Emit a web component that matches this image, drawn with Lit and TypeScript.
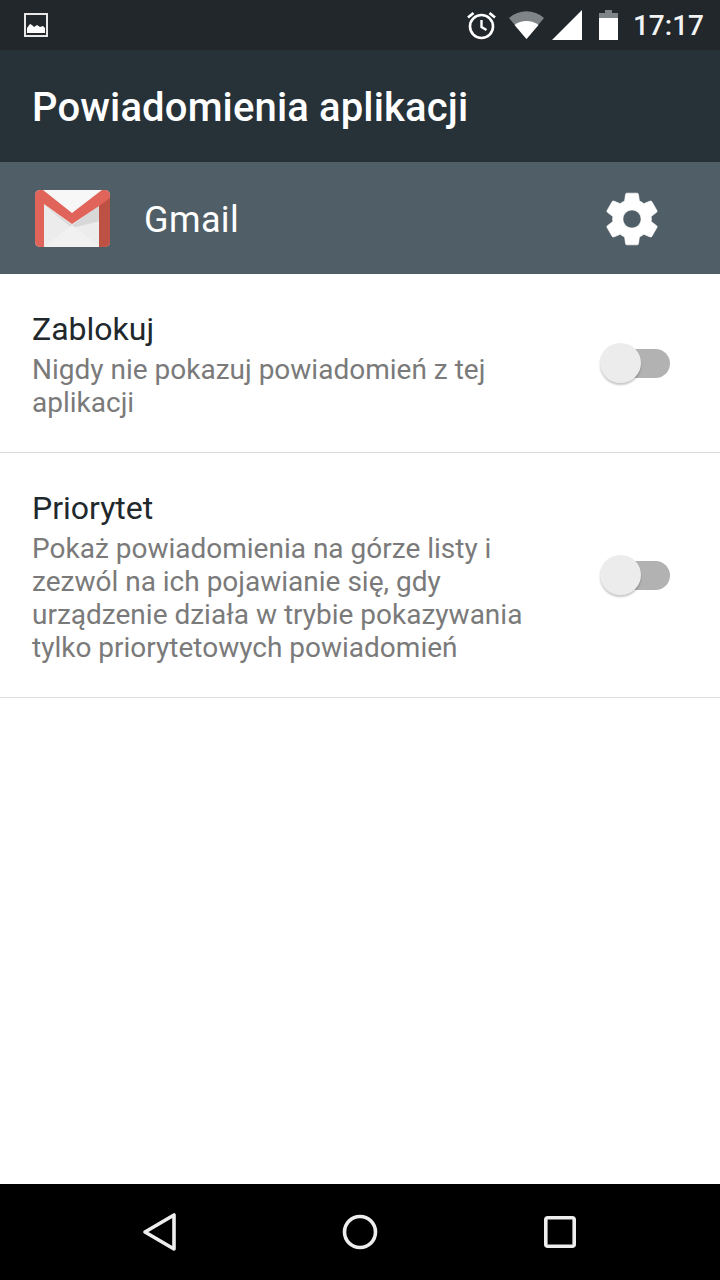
import { LitElement, html, css } from 'lit';
import { customElement } from 'lit/decorators.js';

interface NotificationRow {
  title: string;
  lines: string[];
}

const ROWS: NotificationRow[] = [
  { title: 'Zablokuj', lines: ['Nigdy nie pokazuj powiadomień z tej', 'aplikacji'] },
  {
    title: 'Priorytet',
    lines: [
      'Pokaż powiadomienia na górze listy i',
      'zezwól na ich pojawianie się, gdy',
      'urządzenie działa w trybie pokazywania',
      'tylko priorytetowych powiadomień',
    ],
  },
];

@customElement('app-root')
export class AppRoot extends LitElement {
  static styles = css`
    :host {
      display: flex;
      flex-direction: column;
      width: 720px;
      height: 1280px;
      background: #fff;
      font-family: Roboto, sans-serif;
      overflow: hidden;
    }

    .status {
      height: 50px;
      flex: none;
      background: #21272b;
      display: flex;
      align-items: center;
      padding: 0 16px 0 24px;
      color: #fff;
    }
    .status svg {
      display: block;
    }
    .status .spacer {
      flex: 1;
    }
    .alarm {
      margin-right: 13px;
    }
    .wifi {
      margin-right: 8px;
    }
    .signal {
      margin-right: 17px;
    }
    .clock {
      font-size: 28px;
      font-weight: 500;
      margin-left: 15px;
      color: #f2f3f3;
    }

    .toolbar {
      height: 112px;
      flex: none;
      box-sizing: border-box;
      background: #263238;
      display: flex;
      align-items: center;
      padding: 3px 32px 0;
      color: #fff;
      font-size: 40px;
      font-weight: 500;
      letter-spacing: 0.14px;
    }

    .app-row {
      height: 112px;
      flex: none;
      background: #505f67;
      display: flex;
      align-items: center;
      padding: 0 56px 0 35px;
      color: #fff;
      font-size: 36px;
      letter-spacing: 0.4px;
    }
    .app-name {
      flex: 1;
      margin-left: 34px;
      padding-top: 4px;
    }
    .gmail {
      display: block;
      margin-top: 1px;
    }
    .gear {
      display: block;
      margin: 2px 1px 0 0;
    }

    .row {
      display: flex;
      align-items: center;
      padding: 36px 50px 33px 32px;
      border-bottom: 1px solid #dcdcdc;
    }
    .row-text {
      flex: 1;
    }
    .row-title {
      font-size: 32px;
      line-height: 38px;
      color: #21282c;
    }
    .row-sub {
      font-size: 28px;
      line-height: 33px;
      color: #7a7a7a;
      margin-top: 5px;
    }

    .switch {
      position: relative;
      width: 70px;
      height: 40px;
      flex: none;
      margin-bottom: 4px;
    }
    .track {
      position: absolute;
      left: 2px;
      right: 0;
      top: 6px;
      height: 29px;
      border-radius: 15px;
      background: #b2b2b2;
    }
    .thumb {
      position: absolute;
      left: 0;
      top: 0;
      width: 41px;
      height: 40px;
      border-radius: 50%;
      background: #ececec;
      box-shadow: 0 2px 2px rgba(0, 0, 0, 0.22);
    }

    .fill {
      flex: 1;
    }

    .nav {
      height: 96px;
      flex: none;
      background: #000;
      display: flex;
      align-items: center;
      justify-content: center;
      gap: 152px;
    }
    .nav svg {
      display: block;
    }
  `;

  private _statusIcons() {
    return html`
      <svg width="24" height="24" viewBox="0 0 24 24">
        <rect x="1" y="1" width="22" height="22" fill="none" stroke="#e8e8e8" stroke-width="2" />
        <path d="M3 20v-5l3-4 2 1 2 2 3-2 3 2 3-1 2 2v5z" fill="#fff" />
      </svg>
      <span class="spacer"></span>
      <svg class="alarm" width="29" height="30" viewBox="0 0 29 30">
        <circle cx="14.5" cy="16.5" r="11.5" fill="none" stroke="#fff" stroke-width="2.6" />
        <path d="M14.5 10v7l5 3" fill="none" stroke="#fff" stroke-width="2.4" />
        <path d="M1 7.5L6.5 3M28 7.5L22.5 3" fill="none" stroke="#fff" stroke-width="2.8" />
      </svg>
      <svg class="wifi" width="35" height="30" viewBox="0 0 35 30">
        <path d="M0 8C10-1 25-1 35 8L17.5 29z" fill="#7f8486" />
        <path d="M5.5 15C12 9.5 23 9.5 29.5 15L17.5 29z" fill="#fff" />
      </svg>
      <svg class="signal" width="30" height="30" viewBox="0 0 30 30">
        <path d="M30 0v30H0z" fill="#fff" />
      </svg>
      <svg width="19" height="30" viewBox="0 0 19 30">
        <path d="M6 0h7v3H6zM0 3h19v5H0z" fill="#7f8486" />
        <path d="M0 8h19v22H0z" fill="#fff" />
      </svg>
    `;
  }

  private _gmailIcon() {
    return html`
      <svg class="gmail" width="75" height="58" viewBox="0 0 75 58">
        <rect x="0" y="0" width="75" height="57" rx="5" fill="#ececec" />
        <path d="M8 0h58L37 24z" fill="#f7f7f7" />
        <path d="M9 15l28 20 28-20v16L37 38z" fill="#c4c4c4" opacity="0.5" />
        <path d="M37 35l28 22H9z" fill="#f1f1f1" />
        <path d="M5 0h3l29 23L67 0h3a5 5 0 0 1 5 5v47a5 5 0 0 1-5 5h-6V16L37 34 9 14v43H5a5 5 0 0 1-5-5V5a5 5 0 0 1 5-5z" fill="#e0645a" />
        <path d="M64 16l11-8v44a5 5 0 0 1-5 5h-6z" fill="#bd5244" />
      </svg>
    `;
  }

  private _gearIcon() {
    return html`
      <svg class="gear" width="62" height="62" viewBox="0 0 24 24">
        <path
          fill="#fff"
          stroke="#fff"
          stroke-width="0.25"
          d="M19.43 12.98c.04-.32.07-.64.07-.98s-.03-.66-.07-.98l2.11-1.65c.19-.15.24-.42.12-.64l-2-3.46c-.12-.22-.39-.3-.61-.22l-2.49 1c-.52-.4-1.08-.73-1.69-.98l-.38-2.65C14.46 2.18 14.25 2 14 2h-4c-.25 0-.46.18-.49.42l-.38 2.65c-.61.25-1.17.59-1.69.98l-2.49-1c-.23-.09-.49 0-.61.22l-2 3.46c-.13.22-.07.49.12.64l2.11 1.65c-.04.32-.07.65-.07.98s.03.66.07.98l-2.11 1.65c-.19.15-.24.42-.12.64l2 3.46c.12.22.39.3.61.22l2.49-1c.52.4 1.08.73 1.69.98l.38 2.65c.03.24.24.42.49.42h4c.25 0 .46-.18.49-.42l.38-2.65c.61-.25 1.17-.59 1.69-.98l2.49 1c.23.09.49 0 .61-.22l2-3.46c.12-.22.07-.49-.12-.64l-2.11-1.65zM12 15.5c-1.93 0-3.5-1.57-3.5-3.5s1.57-3.5 3.5-3.5 3.5 1.57 3.5 3.5-1.57 3.5-3.5 3.5z"
        />
      </svg>
    `;
  }

  private _navIcons() {
    return html`
      <svg width="48" height="48" viewBox="0 0 48 48">
        <path d="M9 24L38 7v34z" fill="none" stroke="#eee" stroke-width="3.6" stroke-linejoin="round" />
      </svg>
      <svg width="48" height="48" viewBox="0 0 48 48">
        <circle cx="24" cy="24" r="15.5" fill="none" stroke="#eee" stroke-width="3.6" />
      </svg>
      <svg width="48" height="48" viewBox="0 0 48 48">
        <rect x="9.8" y="9.8" width="28.4" height="28.4" rx="2" fill="none" stroke="#eee" stroke-width="3.6" />
      </svg>
    `;
  }

  render() {
    return html`
      <div class="status">
        ${this._statusIcons()}
        <span class="clock">17:17</span>
      </div>
      <div class="toolbar">Powiadomienia aplikacji</div>
      <div class="app-row">
        ${this._gmailIcon()}
        <span class="app-name">Gmail</span>
        ${this._gearIcon()}
      </div>
      ${ROWS.map(
        (row) => html`
          <div class="row">
            <div class="row-text">
              <div class="row-title">${row.title}</div>
              <div class="row-sub">${row.lines.map((line) => html`<div>${line}</div>`)}</div>
            </div>
            <div class="switch">
              <div class="track"></div>
              <div class="thumb"></div>
            </div>
          </div>
        `
      )}
      <div class="fill"></div>
      <div class="nav">${this._navIcons()}</div>
    `;
  }
}
